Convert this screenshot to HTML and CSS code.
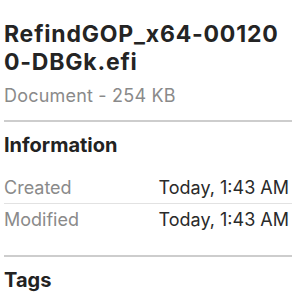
FILE: index.html
```html
<!DOCTYPE html>
<html lang="en">
<head>
    <meta charset="UTF-8">
    <meta name="viewport" content="width=device-width, initial-scale=1.0">
    <title>Info</title>
    <link rel="stylesheet" href="styles.css">
</head>
<body>
    <div class="info-panel">
        <h1 class="file-name">RefindGOP_x64-001200-DBGk.efi</h1>
        <p class="file-kind">Document - 254 KB</p>

        <div class="section">
            <h2 class="section-title">Information</h2>
            <div class="info-row">
                <span class="info-label">Created</span>
                <span class="info-value">Today, 1:43 AM</span>
            </div>
            <div class="info-row">
                <span class="info-label">Modified</span>
                <span class="info-value">Today, 1:43 AM</span>
            </div>
        </div>

        <div class="section section-tags">
            <h2 class="section-title">Tags</h2>
        </div>
    </div>
</body>
</html>
```

FILE: styles.css
```css
body {
    margin: 0;
    padding: 0;
    background-color: #ffffff;
    font-family: Inter, "Liberation Sans", Arial, sans-serif;
}

.info-panel {
    padding: 20px 8px 0 4px;
}

.file-name {
    margin: 0 4px 0 0;
    font-size: 23px;
    line-height: 28px;
    font-weight: 700;
    letter-spacing: 0.8px;
    color: #242424;
    word-break: break-all;
}

.file-kind {
    margin: 8px 0 0 0;
    font-size: 18px;
    line-height: 24px;
    letter-spacing: 0.2px;
    color: #8a8a8a;
}

.section {
    margin-top: 12px;
    border-top: 2px solid #cdcdcd;
    padding-top: 10px;
}

.section-tags {
    margin-top: 20px;
}

.section-title {
    margin: 0 0 14px 0;
    font-size: 20px;
    line-height: 26px;
    font-weight: 700;
    color: #222222;
}

.info-row {
    display: flex;
    justify-content: space-between;
    font-size: 18px;
    line-height: 24px;
    padding: 4px 0 3px 0;
}

.info-row + .info-row {
    border-top: 1px solid #e2e2e2;
}

.info-label {
    color: #8a8a8a;
}

.info-value {
    color: #2a2a2a;
    padding-right: 3px;
}
```
